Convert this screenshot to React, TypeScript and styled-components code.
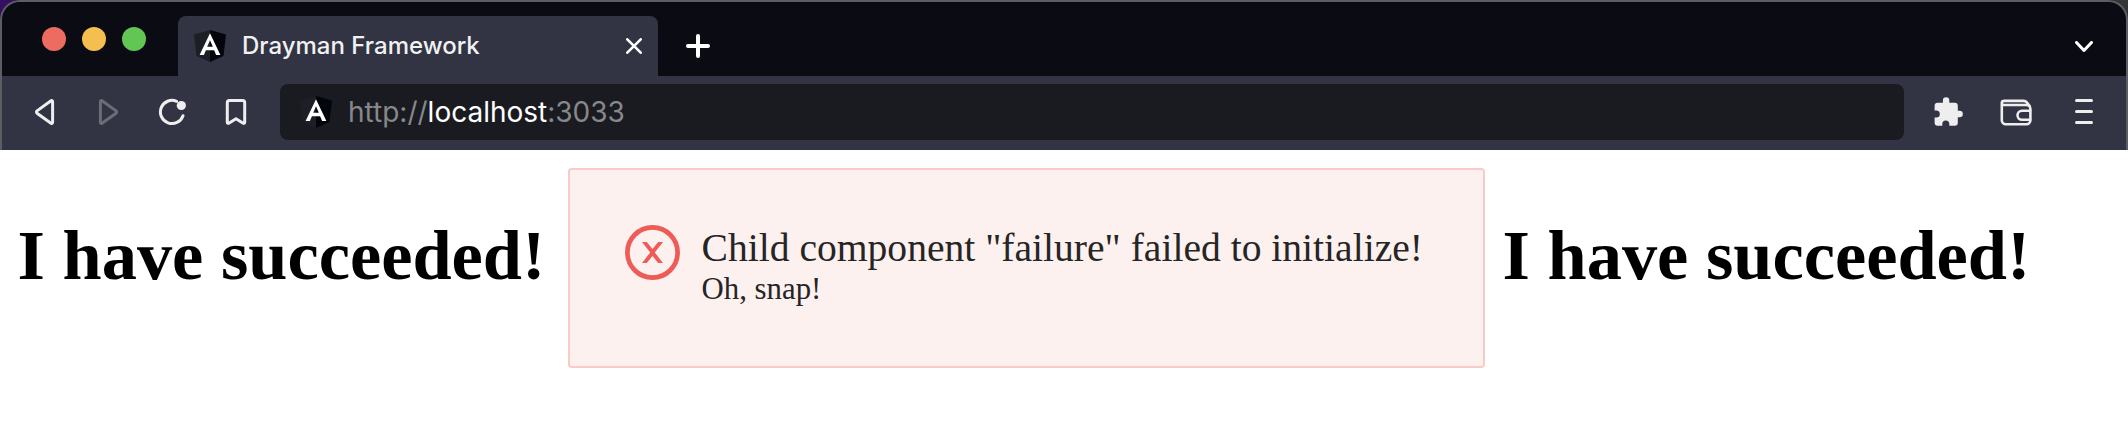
import React from "react";
import styled, { createGlobalStyle } from "styled-components";

const GlobalStyle = createGlobalStyle`
  *, *::before, *::after { box-sizing: border-box; }
  body { margin: 0; background: #fff; }
`;

const Window = styled.div`
  width: 2128px;
  height: 434px;
  overflow: hidden;
  background: #fff;
`;

const Backdrop = styled.div`
  height: 150px;
  background: linear-gradient(90deg, #32105f 0, #32105f 60px, #353538 100px);
`;

const Chrome = styled.header`
  height: 150px;
  border: 2px solid #5d5e64;
  border-bottom: 0;
  border-radius: 20px 20px 0 0;
  overflow: hidden;
  background: #323443;
`;

const TabStrip = styled.div`
  display: flex;
  align-items: flex-start;
  height: 74px;
  padding-right: 33px;
  background: #0b0b14;
`;

const TrafficLights = styled.div`
  display: flex;
  gap: 16px;
  padding: 25px 0 0 40px;
  width: 176px;
`;

const Light = styled.span<{ $color: string }>`
  width: 24px;
  height: 24px;
  border-radius: 50%;
  background: ${(p) => p.$color};
`;

const Tab = styled.div`
  display: flex;
  align-items: center;
  width: 480px;
  height: 60px;
  margin-top: 14px;
  padding: 0 16px;
  border-radius: 8px 8px 0 0;
  background: #323443;
`;

const TabTitle = styled.span`
  flex: 1;
  margin-left: 16px;
  font: 500 24px/30px Inter, sans-serif;
  letter-spacing: 0;
  color: #f1f1f2;
`;

const IconButton = styled.button<{ $left?: number; $top?: number }>`
  display: block;
  flex: none;
  margin: ${(p) => p.$top ?? 0}px 0 0 ${(p) => p.$left ?? 0}px;
  padding: 0;
  border: 0;
  background: none;
  line-height: 0;
`;

const Spacer = styled.div`
  flex: 1;
`;

const Toolbar = styled.div`
  display: flex;
  align-items: center;
  height: 72px;
  padding: 0 30px 0 28px;
`;

const NavButtons = styled.div`
  display: flex;
  gap: 32px;
  width: 250px;
`;

const AddressBar = styled.div`
  display: flex;
  align-items: center;
  width: 1624px;
  height: 56px;
  padding-left: 20px;
  border-radius: 8px;
  background: #1a1b20;
`;

const Url = styled.div`
  margin-left: 16px;
  font: 400 28px/34px Inter, sans-serif;
  color: #87888b;
`;

const Host = styled.span`
  color: #fff;
`;

const Actions = styled.div`
  display: flex;
  gap: 36px;
  margin-left: 28px;
`;

const Page = styled.main`
  display: flex;
  align-items: flex-start;
  padding: 18px 17.6px;
  font-family: "Liberation Serif", "Times New Roman", serif;
`;

const Heading = styled.h1<{ $gap?: number }>`
  flex: none;
  margin: 47px ${(p) => p.$gap ?? 0}px 0 0;
  font-size: 70.4px;
  line-height: 80px;
  font-weight: 700;
  color: #000;
  white-space: nowrap;
`;

const Alert = styled.section`
  display: flex;
  align-items: flex-start;
  flex: none;
  width: 917px;
  height: 200px;
  margin-right: 17.6px;
  padding: 55px 0 0 55px;
  border: 2px solid #f8cbc6;
  border-radius: 4px;
  background: #fdf1ef;
`;

const AlertText = styled.div`
  margin-left: 21.6px;
  color: #262525;
  white-space: nowrap;
`;

const Message = styled.div`
  font-size: 39.6px;
  line-height: 46px;
`;

const Description = styled.div`
  font-size: 30.8px;
  line-height: 36px;
`;

const Shield = () => (
  <svg width="32" height="32" viewBox="0 0 32 32">
    <path d="M16 0 0 4.5 2.5 26 16 32z" fill="#1d1f27" />
    <path d="M16 0 32 4.5 29.5 26 16 32z" fill="#03050d" />
    <path d="M16 3.2 5.6 25h4.3l2-4.7h8.2l2 4.7h4.3zM16 10.2l2.8 6.5h-5.6z" fill="#fff" />
  </svg>
);

const stroke = {
  fill: "none",
  strokeWidth: 3,
  strokeLinecap: "round" as const,
  strokeLinejoin: "round" as const,
};

const BackIcon = () => (
  <svg width="32" height="32" viewBox="0 0 32 32" stroke="#eeeeef" {...stroke}>
    <path d="M22.6 5.5v21c0 .9-.9 1.3-1.6.8L7 17.2c-.7-.6-.7-1.7 0-2.3L21 4.700c.7-.5 1.600-.1 1.600.8z" />
  </svg>
);

const ForwardIcon = () => (
  <svg width="32" height="32" viewBox="0 0 32 32" stroke="#6b6c77" {...stroke}>
    <path d="M6.400 5.500v21c0 .9.9 1.300 1.600.8l14.100-10.100c.7-.6.7-1.700 0-2.300L8 4.700c-.7-.5-1.600-.1-1.600.8z" />
  </svg>
);

const ReloadIcon = () => (
  <svg width="32" height="32" viewBox="0 0 32 32" stroke="#eeeeef" {...stroke}>
    <path d="M18.600 5.300A11.600 11.600 0 1 0 25 19.700" />
    <circle cx="23.300" cy="9.500" r="4.600" fill="#eeeeef" stroke="none" />
  </svg>
);

const BookmarkIcon = () => (
  <svg width="32" height="32" viewBox="0 0 32 32" stroke="#eeeeef" {...stroke}>
    <path d="M7.300 4.500h13.400c1.100 0 2 .9 2 2v19.900c0 .8-.8 1.300-1.500.9L14 22.800l-7.200 4.500c-.7.4-1.500-.1-1.500-.9V6.500c0-1.100.9-2 2-2z" />
  </svg>
);

const CloseIcon = () => (
  <svg width="16" height="16" viewBox="0 0 16 16" stroke="#fff" {...stroke} strokeWidth={2.600}>
    <path d="m1.300 1.300 13.400 13.400M14.700 1.300 1.300 14.700" />
  </svg>
);

const PlusIcon = () => (
  <svg width="24" height="24" viewBox="0 0 24 24" stroke="#fff" {...stroke} strokeWidth={4}>
    <path d="M12 2v20M2 12h20" />
  </svg>
);

const ChevronIcon = () => (
  <svg width="18" height="12" viewBox="0 0 18 12" stroke="#fff" {...stroke}>
    <path d="m1.500 1.500 7.500 8 7.500-8" />
  </svg>
);

const PuzzleIcon = () => (
  <svg width="32" height="32" viewBox="0 0 32 32" fill="#eeeeef">
    <path d="M27.600 14.800H25.800V9.700a3 3 0 0 0-3-3H17.300V4.400a3.200 3.200 0 0 0-6.400 0V6.700H5.600a3 3 0 0 0-3 3V14.500h1.700a3.500 3.500 0 0 1 0 7H2.600V26.700a3 3 0 0 0 3 3h4.700V28a3.500 3.500 0 0 1 7 0v1.700h5.500a3 3 0 0 0 3-3V21.200h1.800a3.200 3.200 0 0 0 0-6.400z" />
  </svg>
);

const WalletIcon = () => (
  <svg width="32" height="32" viewBox="0 0 32 32" stroke="#eeeeef" {...stroke} strokeWidth={2.600}>
    <path d="M1.800 7v17.200a4 4 0 0 0 4 4h20.600a4 4 0 0 0 4-4V13a4 4 0 0 0-4-4H4.400C2.900 9 1.800 8.200 1.800 7s1.100-2.100 2.600-2.100h19.300c1.500 0 2.500.8 3.400 1.800l2.600 3.300" />
    <path d="M30 14.800H22a4.500 4.500 0 0 0 0 9h8" />
  </svg>
);

const MenuIcon = () => (
  <svg width="18" height="32" viewBox="0 0 18 32" stroke="#eeeeef" {...stroke}>
    <path d="M1.500 4.500h15M1.500 15.500h15M1.500 26.500h15" />
  </svg>
);

const ErrorIcon = () => (
  <svg width="55" height="55" viewBox="0 0 55 55" fill="none" stroke="#ed5c57">
    <circle cx="27.500" cy="27.500" r="25.100" strokeWidth="4.700" />
    <path
      d="M17 17h4.800l5.700 7.100L33.200 17H38l-8.200 10.500L38 38h-4.800l-5.700-7.100L21.800 38H17l8.200-10.500z"
      fill="#ed5c57"
      stroke="none"
    />
  </svg>
);

export default function App() {
  return (
    <Window>
      <GlobalStyle />
      <Backdrop>
        <Chrome>
          <TabStrip>
            <TrafficLights>
              <Light $color="#ed6b60" />
              <Light $color="#f5bf4f" />
              <Light $color="#62c655" />
            </TrafficLights>
            <Tab>
              <Shield />
              <TabTitle>Drayman Framework</TabTitle>
              <IconButton aria-label="Close tab">
                <CloseIcon />
              </IconButton>
            </Tab>
            <IconButton aria-label="New tab" $left={28} $top={32}>
              <PlusIcon />
            </IconButton>
            <Spacer />
            <IconButton aria-label="Search tabs" $top={39}>
              <ChevronIcon />
            </IconButton>
          </TabStrip>
          <Toolbar>
            <NavButtons>
              <IconButton aria-label="Back"><BackIcon /></IconButton>
              <IconButton aria-label="Forward"><ForwardIcon /></IconButton>
              <IconButton aria-label="Reload"><ReloadIcon /></IconButton>
              <IconButton aria-label="Bookmark"><BookmarkIcon /></IconButton>
            </NavButtons>
            <AddressBar>
              <Shield />
              <Url>
                http://<Host>localhost</Host>:3033
              </Url>
            </AddressBar>
            <Actions>
              <IconButton aria-label="Extensions"><PuzzleIcon /></IconButton>
              <IconButton aria-label="Wallet"><WalletIcon /></IconButton>
              <IconButton aria-label="Menu" $left={7}><MenuIcon /></IconButton>
            </Actions>
          </Toolbar>
        </Chrome>
      </Backdrop>
      <Page>
        <Heading $gap={22.5}>I have succeeded!</Heading>
        <Alert>
          <ErrorIcon />
          <AlertText>
            <Message>Child component "failure" failed to initialize!</Message>
            <Description>Oh, snap!</Description>
          </AlertText>
        </Alert>
        <Heading>I have succeeded!</Heading>
      </Page>
    </Window>
  );
}
